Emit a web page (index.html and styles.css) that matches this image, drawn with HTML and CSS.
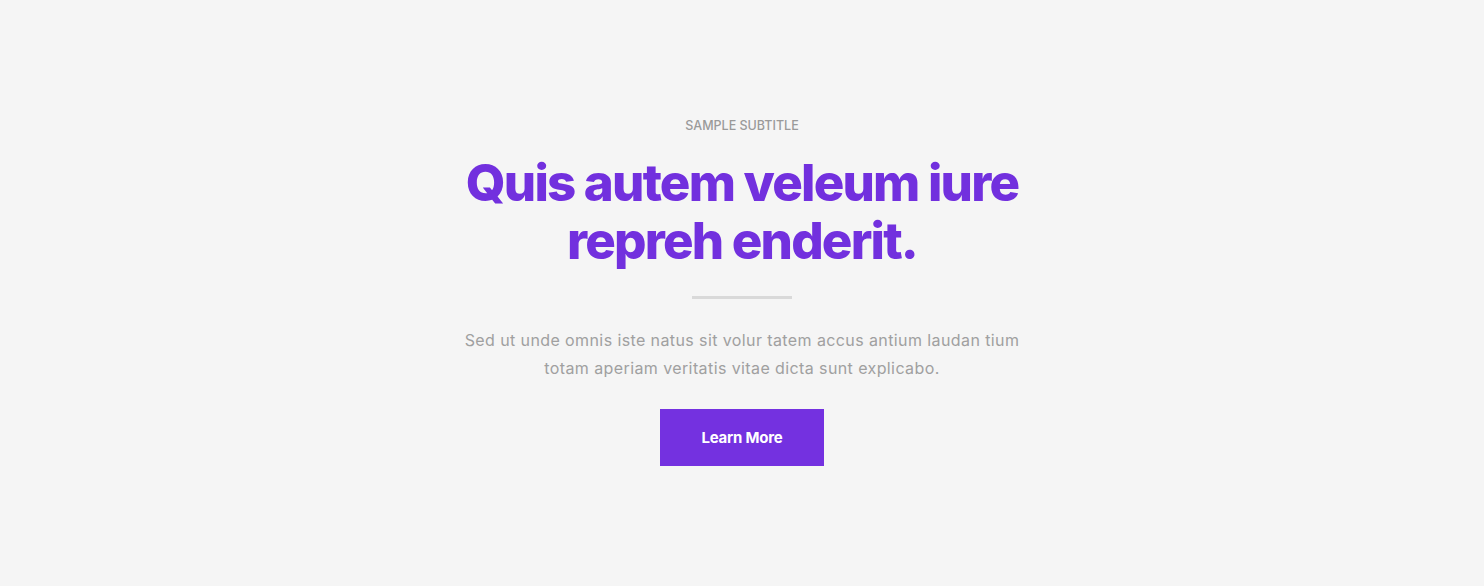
FILE: index.html
```html
<!DOCTYPE html>
<html lang="en">
<head>
  <meta charset="UTF-8">
  <meta name="viewport" content="width=device-width, initial-scale=1.0">
  <title>Hero</title>
  <link rel="stylesheet" href="styles.css">
</head>
<body>
  <section class="hero">
    <div class="hero-inner">
      <p class="subtitle">Sample Subtitle</p>
      <h1 class="title">Quis autem veleum iure repreh enderit.</h1>
      <div class="divider"></div>
      <p class="lead">Sed ut unde omnis iste natus sit volur tatem accus antium laudan tium totam aperiam veritatis vitae dicta sunt explicabo.</p>
      <a class="btn" href="#">Learn More</a>
    </div>
  </section>
</body>
</html>
```

FILE: styles.css
```css
body {
  margin: 0;
  background: #f5f5f5;
  font-family: Inter, "Open Sans", sans-serif;
}

.hero {
  display: flex;
  justify-content: center;
  padding: 118px 20px 100px;
}

.hero-inner {
  width: 570px;
  display: flex;
  flex-direction: column;
  align-items: center;
  text-align: center;
}

.subtitle {
  margin: 0;
  font-size: 12.5px;
  line-height: 16px;
  font-weight: 500;
  text-transform: uppercase;
  color: #9a9a9a;
}

.title {
  margin: 20px 0 0;
  font-size: 51px;
  line-height: 58px;
  font-weight: 800;
  letter-spacing: -1.8px;
  color: #7230de;
}

.divider {
  width: 100px;
  height: 3px;
  background: #d9d9d9;
  margin-top: 26px;
}

/* paragraph */
.lead {
  margin: 27px 0 0;
  max-width: 562px;
  font-size: 16px;
  line-height: 28px;
  letter-spacing: 0.4px;
  color: #a0a0a0;
}

.btn {
  margin-top: 27px;
  display: inline-block;
  width: 164px;
  height: 57px;
  line-height: 57px;
  background: #7431e0;
  color: #fff;
  font-size: 15px;
  font-weight: 700;
  text-decoration: none;
  letter-spacing: -0.2px;
}
```
